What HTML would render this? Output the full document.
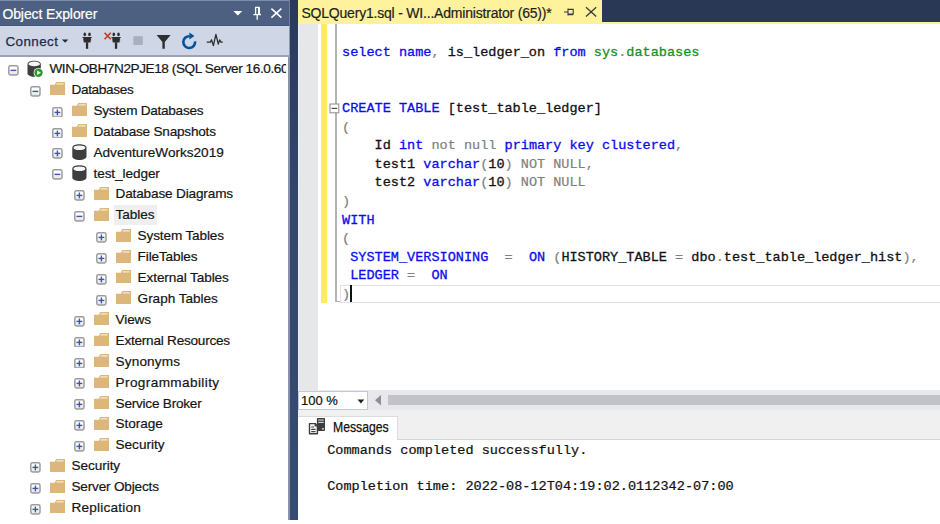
<!DOCTYPE html>
<html><head><meta charset="utf-8"><title>SSMS</title>
<style>
*{box-sizing:border-box;margin:0;padding:0}
html,body{width:940px;height:524px;overflow:hidden;background:#fff}
body{position:relative;font-family:"Liberation Sans",sans-serif;font-size:13.6px;color:#1e1e1e}
.abs,.bx,.ic,.tl,.cl,svg.i{position:absolute}
.tl{height:20px;line-height:20px;white-space:nowrap;color:#151515;-webkit-text-stroke:0.2px #151515}
.cl{left:342.1px;height:18.6px;line-height:18.6px;white-space:pre;font-family:"Liberation Mono",monospace;font-size:13.54px;color:#111}
.k{color:#0b0bee;-webkit-text-stroke:0.3px #0b0bee} .g{color:#808080;-webkit-text-stroke:0.2px #808080} .s{color:#12941a;-webkit-text-stroke:0.3px #12941a} .n{color:#111;-webkit-text-stroke:0.3px #111}
.msg{position:absolute;left:327.2px;font-family:"Liberation Mono",monospace;font-size:13.55px;white-space:pre;color:#111;height:17px;line-height:17px;-webkit-text-stroke:0.22px #111}
</style></head><body>

<svg width="0" height="0" style="position:absolute"><defs><linearGradient id="bg" x1="0" y1="0" x2="0" y2="1"><stop offset="0.35" stop-color="#fff"/><stop offset="1" stop-color="#e2e2e2"/></linearGradient></defs></svg>
<!-- Object Explorer header -->
<div class="abs" style="left:0;top:0;width:289px;height:25.5px;background:#4d6082"></div>
<div class="abs" style="left:0;top:0;width:289px;height:1px;background:#7b8cad"></div>
<div class="abs" style="left:0;top:24.5px;width:289px;height:1.1px;background:#42557a"></div>
<div class="abs" id="oet" style="left:2.4px;top:3.7px;-webkit-text-stroke:0.2px #fff;height:20px;line-height:20px;font-size:14px;letter-spacing:-0.1px;color:#fff;white-space:nowrap">Object Explorer</div>
<svg class="i" style="left:232px;top:6px" width="54" height="16" viewBox="0 0 54 16">
 <path d="M1.4 4.9 L10.3 4.9 L5.85 9.6 Z" fill="#fff"/>
 <path d="M23.2 1.4 L27.6 1.4 M23.6 1.4 L23.6 8.6 M26.6 1.4 L26.6 8.6 M27.4 1.4 L27.4 8.6 M21.4 8.6 L29 8.6 M25.2 8.6 L25.2 13.8" stroke="#fff" stroke-width="1.3" fill="none"/>
 <path d="M39.4 2.6 L49.4 11.6 M49.4 2.6 L39.4 11.6" stroke="#fff" stroke-width="1.55" fill="none"/>
</svg>

<!-- toolbar -->
<div class="abs" style="left:0;top:25.5px;width:289px;height:31px;background:#cfd6e5"></div>
<div class="abs" style="left:0;top:55.3px;width:289px;height:1.5px;background:#9aa2b4"></div>
<div class="abs" id="conn" style="-webkit-text-stroke:0.25px #1e2a4a;left:5.4px;top:31.5px;height:20px;line-height:20px;font-size:13.4px;letter-spacing:0.45px;color:#1e2a4a;white-space:nowrap">Connect</div>
<svg class="i" style="left:60px;top:28px" width="170" height="26" viewBox="60 28 170 26">
 <path d="M61.9 39.4 L68.3 39.4 L65.1 42.8 Z" fill="#1e2a4a"/>
 <!-- plug 1 -->
 <g id="plug" fill="#2d2d2d">
  <ellipse cx="84.8" cy="34.4" rx="1.3" ry="1.8"/><ellipse cx="89.5" cy="34.4" rx="1.3" ry="1.8"/>
  <path d="M82 36.9 L92.2 36.9 L90.8 38.4 L90.8 39.6 L91.2 39.6 L91.2 40.6 L90.6 40.6 L90.6 42.5 L83.7 42.5 L83.7 40.6 L83.1 40.6 L83.1 39.6 L83.5 39.6 L83.5 38.4 Z"/>
  <rect x="85.9" y="42.3" width="2.3" height="6.5"/>
 </g>
 <!-- plug 2 -->
 <g fill="#2d2d2d" transform="translate(29 0)">
  <ellipse cx="84.8" cy="34.4" rx="1.3" ry="1.8"/><ellipse cx="89.5" cy="34.4" rx="1.3" ry="1.8"/>
  <path d="M82 36.9 L92.2 36.9 L90.8 38.4 L90.8 39.6 L91.2 39.6 L91.2 40.6 L90.6 40.6 L90.6 42.5 L83.7 42.5 L83.7 40.6 L83.1 40.6 L83.1 39.6 L83.5 39.6 L83.5 38.4 Z"/>
  <rect x="85.9" y="42.3" width="2.3" height="6.5"/>
 </g>
 <path d="M104.6 32.8 L110.8 39.2 M110.8 32.8 L104.6 39.2" stroke="#bd3b20" stroke-width="1.6" fill="none"/>
 <rect x="133.4" y="36.2" width="9.4" height="8.8" fill="#a9afbf"/>
 <path d="M156.6 35.1 L170.6 35.1 L164.8 42 L164.8 48.8 L162.4 48.8 L162.4 42 Z" fill="#2f2f2f"/>
 <path d="M189.6 36.2 A5.9 5.9 0 1 0 195.05 41.3" stroke="#00539c" stroke-width="2.6" fill="none"/>
 <path d="M189.4 32.6 L194.4 36.1 L189.4 39.5 Z" fill="#00539c"/>
 <path d="M206.7 42.1 L210.4 42.1 L211.5 39.8 L213.4 45.6 L215.9 34.4 L218.3 44 L219.7 39.9 L221 42.1 L222.8 42.1" stroke="#303030" stroke-width="1.3" fill="none" stroke-linejoin="round"/>
</svg>

<!-- tree -->
<div class="abs" id="tree" style="left:0;top:56.8px;width:286.2px;height:464px;overflow:hidden">
<div style="position:absolute;left:0;top:-56.8px;width:600px;height:600px">
<svg class="bx" style="left:8.10px;top:64.80px" width="10.8" height="10.8" viewBox="0 0 10.8 10.8"><rect x="0.8" y="0.8" width="9.2" height="9.2" rx="1.7" fill="url(#bg)" stroke="#9c9c9c" stroke-width="1.5"/><rect x="2.5" y="4.7" width="5.8" height="1.4" fill="#3c56a8"/></svg>
<svg class="ic" style="left:27.40px;top:59.70px" width="18" height="19" viewBox="0 0 18 19"><path d="M0.5 4 C0.5 -0.5 13.8 -0.5 13.8 4 L13.8 13.2 C13.8 17.8 0.5 17.8 0.5 13.2 Z" fill="#3e3e3e"/><ellipse cx="7.2" cy="3.9" rx="5.7" ry="2.3" fill="#f6f6f6"/><circle cx="11.5" cy="12.8" r="4.9" fill="#fff"/><circle cx="11.5" cy="12.8" r="4.2" fill="#2a9a2a"/><path d="M10.1 10.6 L13.9 12.8 L10.1 15 Z" fill="#fff"/></svg>
<div class="tl" id="t0" style="left:49.40px;top:59.00px;letter-spacing:-0.420px">WIN-OBH7N2PJE18 (SQL Server 16.0.60</div>
<svg class="bx" style="left:30.15px;top:85.71px" width="10.8" height="10.8" viewBox="0 0 10.8 10.8"><rect x="0.8" y="0.8" width="9.2" height="9.2" rx="1.7" fill="url(#bg)" stroke="#9c9c9c" stroke-width="1.5"/><rect x="2.5" y="4.7" width="5.8" height="1.4" fill="#3c56a8"/></svg>
<svg class="ic" style="left:49.95px;top:82.26px" width="16" height="14" viewBox="0 0 16 14"><path d="M0 2.7 L4.8 2.7 L6.1 0 L15 0 L15 12.9 L0 12.9 Z" fill="#dcb67a"/><path d="M6.6 1.2 L13.6 1.2 L13.6 2.5 L6.2 2.5 Z" fill="#f5ead4"/></svg>
<div class="tl" id="t1" style="left:71.45px;top:79.91px;letter-spacing:-0.344px">Databases</div>
<svg class="bx" style="left:52.20px;top:106.62px" width="10.8" height="10.8" viewBox="0 0 10.8 10.8"><rect x="0.8" y="0.8" width="9.2" height="9.2" rx="1.7" fill="url(#bg)" stroke="#9c9c9c" stroke-width="1.5"/><rect x="2.5" y="4.7" width="5.8" height="1.4" fill="#3c56a8"/><rect x="4.7" y="2.5" width="1.4" height="5.8" fill="#3c56a8"/></svg>
<svg class="ic" style="left:72.00px;top:103.17px" width="16" height="14" viewBox="0 0 16 14"><path d="M0 2.7 L4.8 2.7 L6.1 0 L15 0 L15 12.9 L0 12.9 Z" fill="#dcb67a"/><path d="M6.6 1.2 L13.6 1.2 L13.6 2.5 L6.2 2.5 Z" fill="#f5ead4"/></svg>
<div class="tl" id="t2" style="left:93.50px;top:100.82px;letter-spacing:-0.273px">System Databases</div>
<svg class="bx" style="left:52.20px;top:127.53px" width="10.8" height="10.8" viewBox="0 0 10.8 10.8"><rect x="0.8" y="0.8" width="9.2" height="9.2" rx="1.7" fill="url(#bg)" stroke="#9c9c9c" stroke-width="1.5"/><rect x="2.5" y="4.7" width="5.8" height="1.4" fill="#3c56a8"/><rect x="4.7" y="2.5" width="1.4" height="5.8" fill="#3c56a8"/></svg>
<svg class="ic" style="left:72.00px;top:124.08px" width="16" height="14" viewBox="0 0 16 14"><path d="M0 2.7 L4.8 2.7 L6.1 0 L15 0 L15 12.9 L0 12.9 Z" fill="#dcb67a"/><path d="M6.6 1.2 L13.6 1.2 L13.6 2.5 L6.2 2.5 Z" fill="#f5ead4"/></svg>
<div class="tl" id="t3" style="left:93.50px;top:121.73px;letter-spacing:-0.221px">Database Snapshots</div>
<svg class="bx" style="left:52.20px;top:148.44px" width="10.8" height="10.8" viewBox="0 0 10.8 10.8"><rect x="0.8" y="0.8" width="9.2" height="9.2" rx="1.7" fill="url(#bg)" stroke="#9c9c9c" stroke-width="1.5"/><rect x="2.5" y="4.7" width="5.8" height="1.4" fill="#3c56a8"/><rect x="4.7" y="2.5" width="1.4" height="5.8" fill="#3c56a8"/></svg>
<svg class="ic" style="left:71.50px;top:143.64px" width="16" height="18" viewBox="0 0 16 18"><path d="M0.3 3.7 C0.3 -0.8 14.5 -0.8 14.5 3.7 L14.5 12.6 C14.5 17.2 0.3 17.2 0.3 12.6 Z" fill="#3e3e3e"/><ellipse cx="7.4" cy="3.75" rx="5.9" ry="2.3" fill="#f6f6f6"/></svg>
<div class="tl" id="t4" style="left:93.50px;top:142.64px;letter-spacing:-0.014px">AdventureWorks2019</div>
<svg class="bx" style="left:52.20px;top:169.35px" width="10.8" height="10.8" viewBox="0 0 10.8 10.8"><rect x="0.8" y="0.8" width="9.2" height="9.2" rx="1.7" fill="url(#bg)" stroke="#9c9c9c" stroke-width="1.5"/><rect x="2.5" y="4.7" width="5.8" height="1.4" fill="#3c56a8"/></svg>
<svg class="ic" style="left:71.50px;top:164.55px" width="16" height="18" viewBox="0 0 16 18"><path d="M0.3 3.7 C0.3 -0.8 14.5 -0.8 14.5 3.7 L14.5 12.6 C14.5 17.2 0.3 17.2 0.3 12.6 Z" fill="#3e3e3e"/><ellipse cx="7.4" cy="3.75" rx="5.9" ry="2.3" fill="#f6f6f6"/></svg>
<div class="tl" id="t5" style="left:93.50px;top:163.55px;letter-spacing:-0.087px">test_ledger</div>
<svg class="bx" style="left:74.25px;top:190.26px" width="10.8" height="10.8" viewBox="0 0 10.8 10.8"><rect x="0.8" y="0.8" width="9.2" height="9.2" rx="1.7" fill="url(#bg)" stroke="#9c9c9c" stroke-width="1.5"/><rect x="2.5" y="4.7" width="5.8" height="1.4" fill="#3c56a8"/><rect x="4.7" y="2.5" width="1.4" height="5.8" fill="#3c56a8"/></svg>
<svg class="ic" style="left:94.05px;top:186.81px" width="16" height="14" viewBox="0 0 16 14"><path d="M0 2.7 L4.8 2.7 L6.1 0 L15 0 L15 12.9 L0 12.9 Z" fill="#dcb67a"/><path d="M6.6 1.2 L13.6 1.2 L13.6 2.5 L6.2 2.5 Z" fill="#f5ead4"/></svg>
<div class="tl" id="t6" style="left:115.55px;top:184.46px;letter-spacing:-0.162px">Database Diagrams</div>
<svg class="bx" style="left:74.25px;top:211.17px" width="10.8" height="10.8" viewBox="0 0 10.8 10.8"><rect x="0.8" y="0.8" width="9.2" height="9.2" rx="1.7" fill="url(#bg)" stroke="#9c9c9c" stroke-width="1.5"/><rect x="2.5" y="4.7" width="5.8" height="1.4" fill="#3c56a8"/></svg>
<svg class="ic" style="left:94.05px;top:207.72px" width="16" height="14" viewBox="0 0 16 14"><path d="M0 2.7 L4.8 2.7 L6.1 0 L15 0 L15 12.9 L0 12.9 Z" fill="#dcb67a"/><path d="M6.6 1.2 L13.6 1.2 L13.6 2.5 L6.2 2.5 Z" fill="#f5ead4"/></svg>
<div class="abs" style="left:114px;top:205.17px;width:42.8px;height:20px;background:#efefef"></div>
<div class="tl" id="t7" style="left:115.55px;top:205.37px;letter-spacing:-0.036px">Tables</div>
<svg class="bx" style="left:96.30px;top:232.08px" width="10.8" height="10.8" viewBox="0 0 10.8 10.8"><rect x="0.8" y="0.8" width="9.2" height="9.2" rx="1.7" fill="url(#bg)" stroke="#9c9c9c" stroke-width="1.5"/><rect x="2.5" y="4.7" width="5.8" height="1.4" fill="#3c56a8"/><rect x="4.7" y="2.5" width="1.4" height="5.8" fill="#3c56a8"/></svg>
<svg class="ic" style="left:116.10px;top:228.63px" width="16" height="14" viewBox="0 0 16 14"><path d="M0 2.7 L4.8 2.7 L6.1 0 L15 0 L15 12.9 L0 12.9 Z" fill="#dcb67a"/><path d="M6.6 1.2 L13.6 1.2 L13.6 2.5 L6.2 2.5 Z" fill="#f5ead4"/></svg>
<div class="tl" id="t8" style="left:137.60px;top:226.28px;letter-spacing:-0.142px">System Tables</div>
<svg class="bx" style="left:96.30px;top:252.99px" width="10.8" height="10.8" viewBox="0 0 10.8 10.8"><rect x="0.8" y="0.8" width="9.2" height="9.2" rx="1.7" fill="url(#bg)" stroke="#9c9c9c" stroke-width="1.5"/><rect x="2.5" y="4.7" width="5.8" height="1.4" fill="#3c56a8"/><rect x="4.7" y="2.5" width="1.4" height="5.8" fill="#3c56a8"/></svg>
<svg class="ic" style="left:116.10px;top:249.54px" width="16" height="14" viewBox="0 0 16 14"><path d="M0 2.7 L4.8 2.7 L6.1 0 L15 0 L15 12.9 L0 12.9 Z" fill="#dcb67a"/><path d="M6.6 1.2 L13.6 1.2 L13.6 2.5 L6.2 2.5 Z" fill="#f5ead4"/></svg>
<div class="tl" id="t9" style="left:137.60px;top:247.19px;letter-spacing:-0.144px">FileTables</div>
<svg class="bx" style="left:96.30px;top:273.90px" width="10.8" height="10.8" viewBox="0 0 10.8 10.8"><rect x="0.8" y="0.8" width="9.2" height="9.2" rx="1.7" fill="url(#bg)" stroke="#9c9c9c" stroke-width="1.5"/><rect x="2.5" y="4.7" width="5.8" height="1.4" fill="#3c56a8"/><rect x="4.7" y="2.5" width="1.4" height="5.8" fill="#3c56a8"/></svg>
<svg class="ic" style="left:116.10px;top:270.45px" width="16" height="14" viewBox="0 0 16 14"><path d="M0 2.7 L4.8 2.7 L6.1 0 L15 0 L15 12.9 L0 12.9 Z" fill="#dcb67a"/><path d="M6.6 1.2 L13.6 1.2 L13.6 2.5 L6.2 2.5 Z" fill="#f5ead4"/></svg>
<div class="tl" id="t10" style="left:137.60px;top:268.10px;letter-spacing:-0.106px">External Tables</div>
<svg class="bx" style="left:96.30px;top:294.81px" width="10.8" height="10.8" viewBox="0 0 10.8 10.8"><rect x="0.8" y="0.8" width="9.2" height="9.2" rx="1.7" fill="url(#bg)" stroke="#9c9c9c" stroke-width="1.5"/><rect x="2.5" y="4.7" width="5.8" height="1.4" fill="#3c56a8"/><rect x="4.7" y="2.5" width="1.4" height="5.8" fill="#3c56a8"/></svg>
<svg class="ic" style="left:116.10px;top:291.36px" width="16" height="14" viewBox="0 0 16 14"><path d="M0 2.7 L4.8 2.7 L6.1 0 L15 0 L15 12.9 L0 12.9 Z" fill="#dcb67a"/><path d="M6.6 1.2 L13.6 1.2 L13.6 2.5 L6.2 2.5 Z" fill="#f5ead4"/></svg>
<div class="tl" id="t11" style="left:137.60px;top:289.01px;letter-spacing:-0.040px">Graph Tables</div>
<svg class="bx" style="left:74.25px;top:315.72px" width="10.8" height="10.8" viewBox="0 0 10.8 10.8"><rect x="0.8" y="0.8" width="9.2" height="9.2" rx="1.7" fill="url(#bg)" stroke="#9c9c9c" stroke-width="1.5"/><rect x="2.5" y="4.7" width="5.8" height="1.4" fill="#3c56a8"/><rect x="4.7" y="2.5" width="1.4" height="5.8" fill="#3c56a8"/></svg>
<svg class="ic" style="left:94.05px;top:312.27px" width="16" height="14" viewBox="0 0 16 14"><path d="M0 2.7 L4.8 2.7 L6.1 0 L15 0 L15 12.9 L0 12.9 Z" fill="#dcb67a"/><path d="M6.6 1.2 L13.6 1.2 L13.6 2.5 L6.2 2.5 Z" fill="#f5ead4"/></svg>
<div class="tl" id="t12" style="left:115.55px;top:309.92px;letter-spacing:-0.124px">Views</div>
<svg class="bx" style="left:74.25px;top:336.63px" width="10.8" height="10.8" viewBox="0 0 10.8 10.8"><rect x="0.8" y="0.8" width="9.2" height="9.2" rx="1.7" fill="url(#bg)" stroke="#9c9c9c" stroke-width="1.5"/><rect x="2.5" y="4.7" width="5.8" height="1.4" fill="#3c56a8"/><rect x="4.7" y="2.5" width="1.4" height="5.8" fill="#3c56a8"/></svg>
<svg class="ic" style="left:94.05px;top:333.18px" width="16" height="14" viewBox="0 0 16 14"><path d="M0 2.7 L4.8 2.7 L6.1 0 L15 0 L15 12.9 L0 12.9 Z" fill="#dcb67a"/><path d="M6.6 1.2 L13.6 1.2 L13.6 2.5 L6.2 2.5 Z" fill="#f5ead4"/></svg>
<div class="tl" id="t13" style="left:115.55px;top:330.83px;letter-spacing:-0.238px">External Resources</div>
<svg class="bx" style="left:74.25px;top:357.54px" width="10.8" height="10.8" viewBox="0 0 10.8 10.8"><rect x="0.8" y="0.8" width="9.2" height="9.2" rx="1.7" fill="url(#bg)" stroke="#9c9c9c" stroke-width="1.5"/><rect x="2.5" y="4.7" width="5.8" height="1.4" fill="#3c56a8"/><rect x="4.7" y="2.5" width="1.4" height="5.8" fill="#3c56a8"/></svg>
<svg class="ic" style="left:94.05px;top:354.09px" width="16" height="14" viewBox="0 0 16 14"><path d="M0 2.7 L4.8 2.7 L6.1 0 L15 0 L15 12.9 L0 12.9 Z" fill="#dcb67a"/><path d="M6.6 1.2 L13.6 1.2 L13.6 2.5 L6.2 2.5 Z" fill="#f5ead4"/></svg>
<div class="tl" id="t14" style="left:115.55px;top:351.74px;letter-spacing:0.143px">Synonyms</div>
<svg class="bx" style="left:74.25px;top:378.45px" width="10.8" height="10.8" viewBox="0 0 10.8 10.8"><rect x="0.8" y="0.8" width="9.2" height="9.2" rx="1.7" fill="url(#bg)" stroke="#9c9c9c" stroke-width="1.5"/><rect x="2.5" y="4.7" width="5.8" height="1.4" fill="#3c56a8"/><rect x="4.7" y="2.5" width="1.4" height="5.8" fill="#3c56a8"/></svg>
<svg class="ic" style="left:94.05px;top:375.00px" width="16" height="14" viewBox="0 0 16 14"><path d="M0 2.7 L4.8 2.7 L6.1 0 L15 0 L15 12.9 L0 12.9 Z" fill="#dcb67a"/><path d="M6.6 1.2 L13.6 1.2 L13.6 2.5 L6.2 2.5 Z" fill="#f5ead4"/></svg>
<div class="tl" id="t15" style="left:115.55px;top:372.65px;letter-spacing:0.385px">Programmability</div>
<svg class="bx" style="left:74.25px;top:399.36px" width="10.8" height="10.8" viewBox="0 0 10.8 10.8"><rect x="0.8" y="0.8" width="9.2" height="9.2" rx="1.7" fill="url(#bg)" stroke="#9c9c9c" stroke-width="1.5"/><rect x="2.5" y="4.7" width="5.8" height="1.4" fill="#3c56a8"/><rect x="4.7" y="2.5" width="1.4" height="5.8" fill="#3c56a8"/></svg>
<svg class="ic" style="left:94.05px;top:395.91px" width="16" height="14" viewBox="0 0 16 14"><path d="M0 2.7 L4.8 2.7 L6.1 0 L15 0 L15 12.9 L0 12.9 Z" fill="#dcb67a"/><path d="M6.6 1.2 L13.6 1.2 L13.6 2.5 L6.2 2.5 Z" fill="#f5ead4"/></svg>
<div class="tl" id="t16" style="left:115.55px;top:393.56px;letter-spacing:-0.232px">Service Broker</div>
<svg class="bx" style="left:74.25px;top:420.27px" width="10.8" height="10.8" viewBox="0 0 10.8 10.8"><rect x="0.8" y="0.8" width="9.2" height="9.2" rx="1.7" fill="url(#bg)" stroke="#9c9c9c" stroke-width="1.5"/><rect x="2.5" y="4.7" width="5.8" height="1.4" fill="#3c56a8"/><rect x="4.7" y="2.5" width="1.4" height="5.8" fill="#3c56a8"/></svg>
<svg class="ic" style="left:94.05px;top:416.82px" width="16" height="14" viewBox="0 0 16 14"><path d="M0 2.7 L4.8 2.7 L6.1 0 L15 0 L15 12.9 L0 12.9 Z" fill="#dcb67a"/><path d="M6.6 1.2 L13.6 1.2 L13.6 2.5 L6.2 2.5 Z" fill="#f5ead4"/></svg>
<div class="tl" id="t17" style="left:115.55px;top:414.47px;letter-spacing:-0.049px">Storage</div>
<svg class="bx" style="left:74.25px;top:441.18px" width="10.8" height="10.8" viewBox="0 0 10.8 10.8"><rect x="0.8" y="0.8" width="9.2" height="9.2" rx="1.7" fill="url(#bg)" stroke="#9c9c9c" stroke-width="1.5"/><rect x="2.5" y="4.7" width="5.8" height="1.4" fill="#3c56a8"/><rect x="4.7" y="2.5" width="1.4" height="5.8" fill="#3c56a8"/></svg>
<svg class="ic" style="left:94.05px;top:437.73px" width="16" height="14" viewBox="0 0 16 14"><path d="M0 2.7 L4.8 2.7 L6.1 0 L15 0 L15 12.9 L0 12.9 Z" fill="#dcb67a"/><path d="M6.6 1.2 L13.6 1.2 L13.6 2.5 L6.2 2.5 Z" fill="#f5ead4"/></svg>
<div class="tl" id="t18" style="left:115.55px;top:435.38px;letter-spacing:-0.026px">Security</div>
<svg class="bx" style="left:30.15px;top:462.09px" width="10.8" height="10.8" viewBox="0 0 10.8 10.8"><rect x="0.8" y="0.8" width="9.2" height="9.2" rx="1.7" fill="url(#bg)" stroke="#9c9c9c" stroke-width="1.5"/><rect x="2.5" y="4.7" width="5.8" height="1.4" fill="#3c56a8"/><rect x="4.7" y="2.5" width="1.4" height="5.8" fill="#3c56a8"/></svg>
<svg class="ic" style="left:49.95px;top:458.64px" width="16" height="14" viewBox="0 0 16 14"><path d="M0 2.7 L4.8 2.7 L6.1 0 L15 0 L15 12.9 L0 12.9 Z" fill="#dcb67a"/><path d="M6.6 1.2 L13.6 1.2 L13.6 2.5 L6.2 2.5 Z" fill="#f5ead4"/></svg>
<div class="tl" id="t19" style="left:71.45px;top:456.29px;letter-spacing:-0.056px">Security</div>
<svg class="bx" style="left:30.15px;top:483.00px" width="10.8" height="10.8" viewBox="0 0 10.8 10.8"><rect x="0.8" y="0.8" width="9.2" height="9.2" rx="1.7" fill="url(#bg)" stroke="#9c9c9c" stroke-width="1.5"/><rect x="2.5" y="4.7" width="5.8" height="1.4" fill="#3c56a8"/><rect x="4.7" y="2.5" width="1.4" height="5.8" fill="#3c56a8"/></svg>
<svg class="ic" style="left:49.95px;top:479.55px" width="16" height="14" viewBox="0 0 16 14"><path d="M0 2.7 L4.8 2.7 L6.1 0 L15 0 L15 12.9 L0 12.9 Z" fill="#dcb67a"/><path d="M6.6 1.2 L13.6 1.2 L13.6 2.5 L6.2 2.5 Z" fill="#f5ead4"/></svg>
<div class="tl" id="t20" style="left:71.45px;top:477.20px;letter-spacing:-0.182px">Server Objects</div>
<svg class="bx" style="left:30.15px;top:503.91px" width="10.8" height="10.8" viewBox="0 0 10.8 10.8"><rect x="0.8" y="0.8" width="9.2" height="9.2" rx="1.7" fill="url(#bg)" stroke="#9c9c9c" stroke-width="1.5"/><rect x="2.5" y="4.7" width="5.8" height="1.4" fill="#3c56a8"/><rect x="4.7" y="2.5" width="1.4" height="5.8" fill="#3c56a8"/></svg>
<svg class="ic" style="left:49.95px;top:500.46px" width="16" height="14" viewBox="0 0 16 14"><path d="M0 2.7 L4.8 2.7 L6.1 0 L15 0 L15 12.9 L0 12.9 Z" fill="#dcb67a"/><path d="M6.6 1.2 L13.6 1.2 L13.6 2.5 L6.2 2.5 Z" fill="#f5ead4"/></svg>
<div class="tl" id="t21" style="left:71.45px;top:498.11px;letter-spacing:0.205px">Replication</div>
</div></div>

<!-- splitter -->
<div class="abs" style="left:289px;top:0;width:8.7px;height:520px;background:linear-gradient(#2a3958 0,#2c3c5d 40px,#33466b 200px,#374c71 520px)"></div>
<div class="abs" style="left:287.9px;top:56.8px;width:2px;height:463.2px;background:#8792ad"></div>
<div class="abs" style="left:288.8px;top:25.5px;width:1.2px;height:31.3px;background:#8d99b6"></div>
<div class="abs" style="left:288.8px;top:0;width:1.2px;height:25.5px;background:#6c7da0"></div>

<!-- tab strip -->
<div class="abs" style="left:297.6px;top:0;width:642.4px;height:24px;background:#fff29d"></div>
<div class="abs" style="left:602px;top:0;width:338px;height:21.8px;background:#293955"></div>
<div class="abs" id="tabt" style="-webkit-text-stroke:0.2px #1e1e1e;left:301.4px;top:3.1px;height:20px;line-height:20px;font-size:14px;letter-spacing:-0.2px;color:#1e1e1e;white-space:nowrap">SQLQuery1.sql - WI...Administrator (65))*</div>
<svg class="i" style="left:560px;top:4px" width="40" height="16" viewBox="560 4 40 16">
 <path d="M564 12 L568 12 M568 8.4 L568 15.6 M568 9.4 L573.2 9.4 L573.2 14 L568 14 M568 14.6 L573.2 14.6" stroke="#3a3a3a" stroke-width="1.1" fill="none"/>
 <path d="M586 7.2 L596.2 16.4 M596.2 7.2 L586 16.4" stroke="#3a3a3a" stroke-width="1.3" fill="none"/>
</svg>

<!-- editor -->
<div class="abs" style="left:297.7px;top:24px;width:20.4px;height:366px;background:#e6e7e8"></div>
<div class="abs" style="left:297.7px;top:24px;width:1.8px;height:366px;background:#efeff1"></div>
<div class="abs" style="left:320.7px;top:24px;width:6.1px;height:279.2px;background:#ffec60"></div>
<div class="abs" style="left:335.4px;top:24px;width:1.5px;height:278.4px;background:#b4b4b4"></div>
<div class="abs" style="left:335.4px;top:301.2px;width:4.6px;height:1.3px;background:#b4b4b4"></div>
<!-- current line -->
<div class="abs" style="left:340px;top:285px;width:600px;height:17.6px;border:1.6px solid #dfe0ea;border-right:none;background:#fff"></div>
<div class="abs" style="left:350.2px;top:285.4px;width:1.5px;height:16.4px;background:#111"></div>
<!-- fold box -->
<svg class="i" style="left:329.3px;top:103.1px" width="11" height="11" viewBox="0 0 11 11">
 <rect x="1" y="1" width="8.8" height="8.8" fill="#fff" stroke="#8a8a8a" stroke-width="1"/>
 <rect x="2.6" y="4.8" width="5.6" height="1.2" fill="#4a4a4a"/>
</svg>
<div class="cl" id="c0" style="top:44.20px"><span class="k">select name</span><span class="g">, </span><span class="n">is_ledger_on </span><span class="k">from </span><span class="s">sys</span><span class="g">.</span><span class="s">databases</span></div>
<div class="cl" id="c3" style="top:100.00px"><span class="k">CREATE TABLE </span><span class="n">[test_table_ledger]</span></div>
<div class="cl" id="c4" style="top:118.60px"><span class="g">(</span></div>
<div class="cl" id="c5" style="top:137.20px"><span class="n">    Id </span><span class="k">int </span><span class="g">not null </span><span class="k">primary key clustered</span><span class="g">,</span></div>
<div class="cl" id="c6" style="top:155.80px"><span class="n">    test1 </span><span class="k">varchar</span><span class="g">(</span><span class="n">10</span><span class="g">) NOT NULL,</span></div>
<div class="cl" id="c7" style="top:174.40px"><span class="n">    test2 </span><span class="k">varchar</span><span class="g">(</span><span class="n">10</span><span class="g">) NOT NULL</span></div>
<div class="cl" id="c8" style="top:193.00px"><span class="g">)</span></div>
<div class="cl" id="c9" style="top:211.60px"><span class="k">WITH</span></div>
<div class="cl" id="c10" style="top:230.20px"><span class="g">(</span></div>
<div class="cl" id="c11" style="top:248.80px"><span class="k"> SYSTEM_VERSIONING  </span><span class="g">=  </span><span class="k">ON </span><span class="g">(</span><span class="n">HISTORY_TABLE </span><span class="g">= </span><span class="n">dbo</span><span class="g">.</span><span class="n">test_table_ledger_hist</span><span class="g">),</span></div>
<div class="cl" id="c12" style="top:267.40px"><span class="k"> LEDGER </span><span class="g">=  </span><span class="k">ON</span></div>
<div class="cl" id="c13" style="top:286.00px"><span class="g">)</span></div>

<!-- zoom / scrollbar row -->
<div class="abs" style="left:297.6px;top:390px;width:642.4px;height:20px;background:#e8e8ec"></div>
<div class="abs" style="left:297.6px;top:390.6px;width:70px;height:19px;background:#fff;border:1px solid #c3c9dd"></div>
<div class="abs" id="zm" style="-webkit-text-stroke:0.2px #111;left:301px;top:390.6px;height:20px;line-height:20px;font-size:13px;color:#111;white-space:nowrap">100 %</div>
<svg class="i" style="left:355px;top:392px" width="30" height="16" viewBox="355 392 30 16">
 <path d="M357.6 399.4 L364.2 399.4 L360.9 403.4 Z" fill="#1e1e1e"/>
 <path d="M381 395 L381 405.6 L375 400.3 Z" fill="#8d8d9b"/>
</svg>
<div class="abs" style="left:387.6px;top:395.2px;width:553px;height:9.8px;background:#c2c3c9"></div>

<!-- results tabs -->
<div class="abs" style="left:297.6px;top:410px;width:642.4px;height:29.4px;background:#f0f0f0"></div>
<div class="abs" style="left:297.6px;top:438.8px;width:642.4px;height:1.2px;background:#d4d4d4"></div>
<div class="abs" style="left:297.6px;top:415.6px;width:100.6px;height:24.6px;background:#fff;border:1px solid #dcdcdc;border-bottom:none;border-left:none"></div>
<svg class="i" style="left:306px;top:416px" width="22" height="22" viewBox="306 416 22 22">
 <rect x="316.9" y="418" width="8.1" height="12.9" rx="0.8" fill="#3c3c3c"/>
 <rect x="318.2" y="419.2" width="5.6" height="1.9" fill="#9c9c9c"/>
 <rect x="318.2" y="421.9" width="5.6" height="0.9" fill="#f4f4f4"/>
 <rect x="321.9" y="428" width="2" height="1.6" fill="#c8c8c8"/>
 <path d="M309.5 423.6 L315.2 423.6 L317.4 425.8 L317.4 433.8 L309.5 433.8 Z" fill="#fff" stroke="#3c3c3c" stroke-width="1.4" stroke-linejoin="round"/>
 <path d="M314.6 423.4 L317.6 426.4 L314.6 426.4 Z" fill="#3c3c3c"/>
 <path d="M311.2 427 L314 427 M311.2 429.3 L315.6 429.3 M311.2 431.6 L315.6 431.6" stroke="#3c3c3c" stroke-width="1.2"/>
</svg>
<div class="abs" id="msgt" style="left:332.6px;top:417.2px;height:20px;line-height:20px;font-size:14px;color:#111;white-space:nowrap;transform:scaleX(0.872);transform-origin:0 50%;-webkit-text-stroke:0.25px #111">Messages</div>

<div class="msg" id="m0" style="top:441.9px">Commands completed successfully.</div>
<div class="msg" id="m1" style="top:477.5px">Completion time: 2022-08-12T04:19:02.0112342-07:00</div>

</body></html>
